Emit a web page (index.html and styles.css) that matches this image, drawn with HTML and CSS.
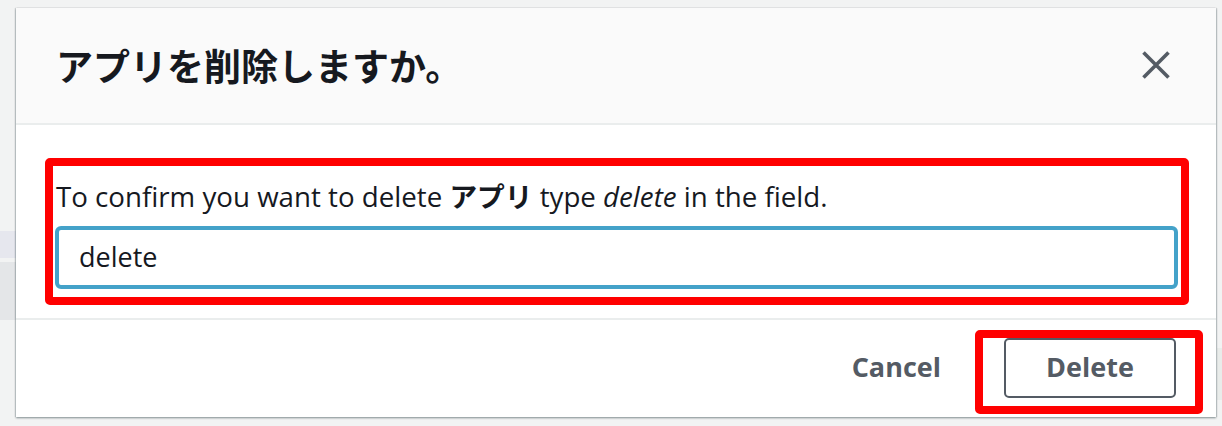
FILE: index.html
```html
<!DOCTYPE html>
<html lang="ja">
<head>
<meta charset="utf-8">
<title>アプリを削除しますか。</title>
<link rel="stylesheet" href="styles.css">
</head>
<body>
<div class="modal">
  <div class="modal-header">
    <h2 class="modal-title">アプリを削除しますか。</h2>
    <button class="close-btn" aria-label="Close">
      <svg width="28" height="28" viewBox="0 0 28 28"><path d="M1.5 1.5 L26.5 26.5 M26.5 1.5 L1.5 26.5" stroke="#545b64" stroke-width="3.6" fill="none"/></svg>
    </button>
  </div>
  <div class="modal-body">
    <div class="highlight field-box">
      <p class="label">To confirm you want to delete <b>アプリ</b> type <i>delete</i> in the field.</p>
      <div class="input">delete</div>
    </div>
  </div>
  <div class="modal-footer">
    <span class="link-btn">Cancel</span>
    <div class="highlight btn-box">
      <button class="btn">Delete</button>
    </div>
  </div>
</div>
</body>
</html>
```
FILE: styles.css
```css
* { box-sizing: border-box; }
html, body { margin: 0; height: 100%; }
body {
  background:
    linear-gradient(#f2f3f3, #f2f3f3) no-repeat 0 0 / 16px 231px,
    linear-gradient(#e6e7ee, #e6e7ee) no-repeat 0 231px / 16px 27px,
    linear-gradient(#f2f3f3, #f2f3f3) no-repeat 0 258px / 16px 4px,
    linear-gradient(#e4e6e8, #e4e6e8) no-repeat 0 262px / 16px 58px,
    linear-gradient(#e9ecea, #e9ecea) no-repeat 1217px 348px / 8px 52px,
    #f2f3f3;
  font-family: "Open Sans", "Noto Sans CJK JP", sans-serif;
  color: #16191f;
  overflow: hidden;
}
.modal {
  width: 1200px;
  height: 409px;
  margin: 8px 0 0 16px;
  background: #fff;
  box-shadow: 0 1px 2px rgba(0, 28, 36, 0.45), 1px 0 1px rgba(0, 28, 36, 0.12), -1px 0 1px rgba(0, 28, 36, 0.12);
  display: flex;
  flex-direction: column;
}
.modal-header {
  height: 117px;
  background: #fafafa;
  border-bottom: 2px solid #eaeded;
  display: flex;
  align-items: center;
  justify-content: space-between;
  padding: 0 46px 2px 40px;
}
.modal-title {
  margin: 0;
  font-family: "Noto Sans CJK JP", sans-serif;
  font-size: 37px;
  font-weight: 700;
  color: #16191f;
}
.close-btn {
  background: none;
  border: 0;
  padding: 0;
  width: 28px;
  height: 28px;
  display: flex;
}
.modal-body {
  padding: 33px 27px 13px 29px;
  border-bottom: 2px solid #eaeded;
}
.highlight {
  border: 8px solid #ff0000;
  border-radius: 5px;
}
.field-box {
  padding: 9px 3px 8px 2px;
}
.label {
  margin: 0 0 10px 1px;
  font-size: 27.7px;
  line-height: 40px;
  color: #16191f;
}
.label b { font-family: "Noto Sans CJK JP", sans-serif; font-weight: 700; }
.input {
  height: 63px;
  border: 4px solid #44a2c9;
  border-radius: 6px;
  padding: 0 20px;
  font-size: 27px;
  line-height: 53px;
  color: #16191f;
}
.modal-footer {
  flex: 1;
  display: flex;
  justify-content: flex-end;
  align-items: flex-start;
  padding: 10px 13px 0 0;
}
.link-btn {
  font-size: 27px;
  font-weight: 700;
  color: #545b64;
  line-height: 58px;
  margin: 8px 34px 0 0;
}
.btn-box {
  padding: 0 19px 8px 21px;
}
.btn {
  width: 172px;
  height: 60px;
  border: 2px solid #545b64;
  border-radius: 5px;
  background: #fff;
  font-family: "Open Sans", sans-serif;
  font-size: 27px;
  font-weight: 700;
  color: #545b64;
  padding: 0 0 3px;
}
```
